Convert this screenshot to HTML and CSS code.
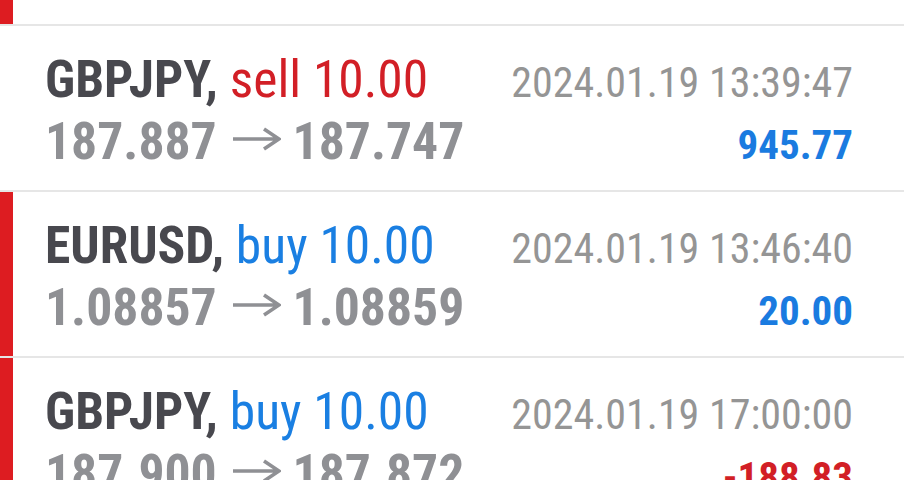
FILE: index.html
```html
<!DOCTYPE html>
<html lang="en">

<head>
    <meta charset="utf-8">
    <meta name="viewport" content="width=device-width, initial-scale=1.0">
    <title>History</title>

    <link rel="stylesheet" href="styles.css">
</head>

<body>
    <main class="deals">
        <div class="deal marked tail"></div>
        <article class="deal">
            <p class="title">GBPJPY, <span class="sell">sell 10.00</span></p>
            <p class="time">2024.01.19 13:39:47</p>
            <p class="prices">187.887 <svg class="arrow" viewBox="0 0 48 24" aria-label="to"><path d="M0 12H45M31 2L46 12L31 22"/></svg> 187.747</p>
            <p class="profit">945.77</p>
        </article>
        <article class="deal marked">
            <p class="title">EURUSD, <span class="buy">buy 10.00</span></p>
            <p class="time">2024.01.19 13:46:40</p>
            <p class="prices">1.08857 <svg class="arrow" viewBox="0 0 48 24" aria-label="to"><path d="M0 12H45M31 2L46 12L31 22"/></svg> 1.08859</p>
            <p class="profit">20.00</p>
        </article>
        <article class="deal marked">
            <p class="title">GBPJPY, <span class="buy">buy 10.00</span></p>
            <p class="time">2024.01.19 17:00:00</p>
            <p class="prices">187.900 <svg class="arrow" viewBox="0 0 48 24" aria-label="to"><path d="M0 12H45M31 2L46 12L31 22"/></svg> 187.872</p>
            <p class="profit loss">-188.83</p>
        </article>
    </main>
</body>

</html>
```

FILE: styles.css
```css
body {
    margin: 0;
    background-color: white;
    font-family: "Roboto Condensed", "Liberation Sans Narrow", Roboto, sans-serif;
    overflow: hidden;
}

.deal {
    display: grid;
    grid-template-columns: 1fr auto;
    align-items: baseline;
    align-content: start;
    box-sizing: border-box;
    height: 166px;
    padding: 24px 51px 0 45px;
    border-bottom: 2px solid #e6e6e6;
}

.tail {
    height: 26px;
    padding: 0;
}

.marked {
    box-shadow: inset 13px 0 0 #dd1c21;
}

.deal p {
    margin: 0;
    line-height: 59px;
    white-space: nowrap;
}

.title {
    font-size: 51.5px;
    font-weight: bold;
    color: #48484e;
}

.title span {
    font-weight: normal;
}

.sell {
    color: #d21f26;
}

.buy {
    color: #1a7fe2;
}

.prices {
    font-size: 51.7px;
    font-weight: bold;
    color: #8f9094;
}

.arrow {
    width: 48px;
    height: 24px;
    margin-left: 4px;
    vertical-align: 8px;
    fill: none;
    stroke: #8f9094;
    stroke-width: 3.6;
}

.time {
    font-size: 42px;
    color: #959595;
    text-align: right;
}

.profit {
    font-size: 41px;
    font-weight: bold;
    color: #1a7be0;
    text-align: right;
}

.loss {
    color: #d21f26;
}
```
